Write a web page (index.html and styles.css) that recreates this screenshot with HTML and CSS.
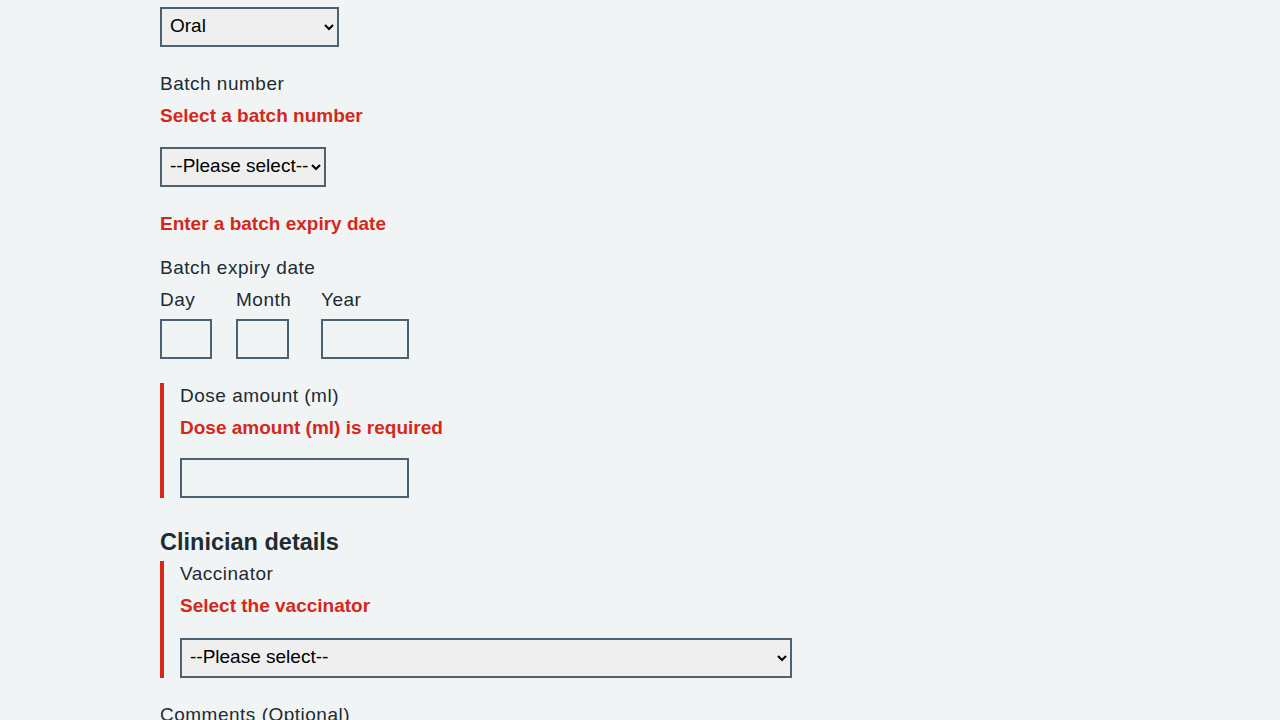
FILE: index.html
```html
<!DOCTYPE html>
<html lang="en">
<head>
<meta charset="utf-8">
<title>Record vaccination</title>
<link rel="stylesheet" href="styles.css">
</head>
<body>
<main class="container">
  <div class="form-group">
    <select class="select select-route">
      <option>Oral</option>
      <option>Intramuscular</option>
      <option>Subcutaneous</option>
    </select>
  </div>

  <div class="form-group">
    <label class="label">Batch number</label>
    <span class="error-message">Select a batch number</span>
    <select class="select select-batch">
      <option>--Please select--</option>
    </select>
  </div>

  <div class="form-group">
    <span class="error-message">Enter a batch expiry date</span>
    <fieldset class="fieldset">
      <legend class="legend">Batch expiry date</legend>
      <div class="date-input">
        <div class="date-item">
          <label class="label">Day</label>
          <input class="input input-day" type="text">
        </div>
        <div class="date-item date-item-month">
          <label class="label">Month</label>
          <input class="input input-month" type="text">
        </div>
        <div class="date-item">
          <label class="label">Year</label>
          <input class="input input-year" type="text">
        </div>
      </div>
    </fieldset>
  </div>

  <div class="form-group form-group-error group-dose">
    <label class="label">Dose amount (ml)</label>
    <span class="error-message">Dose amount (ml) is required</span>
    <input class="input input-dose" type="text">
  </div>

  <h2 class="heading">Clinician details</h2>
  <div class="form-group form-group-error group-vaccinator">
    <label class="label">Vaccinator</label>
    <span class="error-message">Select the vaccinator</span>
    <select class="select select-vaccinator">
      <option>--Please select--</option>
    </select>
  </div>

  <div class="form-group">
    <label class="label">Comments (Optional)</label>
  </div>
</main>
</body>
</html>
```

FILE: styles.css
```css
html, body {
  margin: 0;
  padding: 0;
  height: 720px;
  overflow: hidden;
  background: #f0f4f5;
}

body {
  font-family: "Liberation Sans", Arial, sans-serif;
  font-size: 19px;
  line-height: 28px;
  color: #212b32;
}

.container {
  width: 960px;
  margin: 0 auto;
  padding-top: 7px;
}

.form-group {
  margin-bottom: 24px;
}

.form-group-error {
  border-left: 4px solid #d5281b;
  padding-left: 16px;
}

.label,
.legend {
  display: block;
  margin-bottom: 4px;
  padding: 0 0 3px;
  line-height: 25px;
  letter-spacing: 0.5px;
}

.error-message {
  display: block;
  color: #d5281b;
  font-weight: bold;
  line-height: 25px;
  padding-bottom: 3px;
  margin-bottom: 16px;
}

.group-dose .error-message {
  margin-bottom: 15px;
}

.group-vaccinator .error-message {
  margin-bottom: 17px;
}

.select {
  display: block;
  box-sizing: border-box;
  height: 40px;
  font-family: inherit;
  font-size: 19px;
  color: #000;
  background-color: #efefef;
  border: 2px solid #4c6272;
  border-radius: 0;
  padding: 0 0 3px 4px;
  margin: 0;
}

.select-route { width: 179px; }
.select-batch { width: 166px; }
.select-vaccinator { width: 612px; }

.fieldset {
  border: 0;
  margin: 0;
  padding: 0;
  min-width: 0;
}

.date-input {
  display: flex;
}

.date-item {
  margin-right: 24px;
}

.date-item-month {
  min-width: 61px;
}

.input {
  display: block;
  box-sizing: border-box;
  height: 40px;
  font-family: inherit;
  font-size: 19px;
  background: transparent;
  border: 2px solid #4c6272;
  border-radius: 0;
  padding: 4px;
  margin: 0;
}

.input-day { width: 52px; }
.input-month { width: 53px; }
.input-year { width: 88px; }
.input-dose { width: 229px; }

.heading {
  font-size: 23.5px;
  line-height: 37px;
  padding-top: 2px;
  font-weight: bold;
  margin: 0;
}
```
